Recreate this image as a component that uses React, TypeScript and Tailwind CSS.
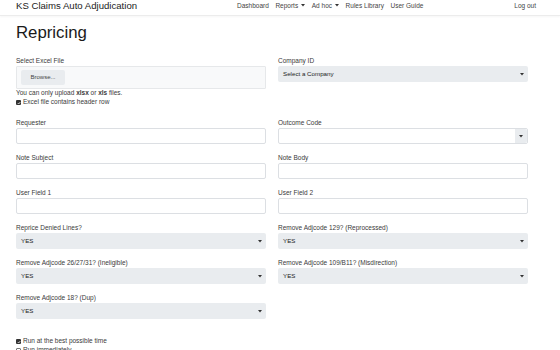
import React from "react";

const font = { fontFamily: '"Liberation Sans", Arial, sans-serif' };

function Caret({ className = "" }: { className?: string }) {
  return (
    <svg width="4" height="3" viewBox="0 0 4 3" className={className}>
      <path d="M0 0 L4 0 L2 2.6 Z" fill="#333" />
    </svg>
  );
}

function Label({ children }: { children: React.ReactNode }) {
  return <div className="h-[8px] leading-[8px] text-[6.5px] text-[#3a3a3a] mb-[1px] whitespace-nowrap">{children}</div>;
}

function TextInput() {
  return <div className="h-[16px] rounded-[2px] border border-[#dcdfe3] bg-white" />;
}

function GraySelect({ value }: { value: string }) {
  return (
    <div className="h-[16px] rounded-[2px] bg-[#e9ecef] flex items-center pl-[5px] pr-[4px]">
      <span className="text-[6.2px] text-[#222] leading-none flex-1">{value}</span>
      <Caret />
    </div>
  );
}

function Field({ label, children }: { label: string; children: React.ReactNode }) {
  return (
    <div className="mb-[10px]">
      <Label>{label}</Label>
      {children}
    </div>
  );
}

function Check({ checked, label }: { checked: boolean; label: string }) {
  return (
    <div className="flex items-center h-[9px] text-[6.5px] text-[#3a3a3a] leading-none">
      {checked ? (
        <span className="w-[5px] h-[5px] bg-[#333] rounded-[1px] flex items-center justify-center mr-[2px]">
          <svg width="4" height="4" viewBox="0 0 4 4">
            <path d="M0.7 2 L1.7 3 L3.3 1" stroke="white" strokeWidth="0.7" fill="none" />
          </svg>
        </span>
      ) : (
        <span className="w-[5px] h-[5px] border border-[#777] rounded-[1px] mr-[2px] bg-white" />
      )}
      <span>{label}</span>
    </div>
  );
}

export default function App() {
  return (
    <div className="w-[560px] h-[350px] overflow-hidden bg-white" style={font}>
      {/* Navbar */}
      <div className="h-[16px] flex items-start border-b border-[#ececec] shadow-[0_1px_2px_rgba(0,0,0,0.04)]">
        <div className="w-[237px] pl-[16px] text-[9.6px] leading-[11px] text-[#222] pt-[0px] whitespace-nowrap">
          KS Claims Auto Adjudication
        </div>
        <div className="flex items-center gap-[6.6px] text-[6.5px] text-[#444] leading-none pt-[2.5px]">
          <span>Dashboard</span>
          <span className="flex items-center">Reports<Caret className="ml-[3px]" /></span>
          <span className="flex items-center">Ad hoc<Caret className="ml-[3px]" /></span>
          <span>Rules Library</span>
          <span>User Guide</span>
        </div>
        <div className="ml-auto pr-[24px] text-[6.5px] text-[#444] leading-none pt-[2.5px]">Log out</div>
      </div>

      <div className="pl-[16px] w-[528px]">
        <h1 className="text-[16.8px] leading-[20px] text-[#1a1a1a] mt-[7px] mb-[14px]">Repricing</h1>

        <div className="grid grid-cols-[250px_250px] gap-x-[12px]">
          {/* Row 1 */}
          <div className="mb-[12px]">
            <Label>Select Excel File</Label>
            <div className="h-[23px] border border-[#e6e8ea] bg-[#f8f9fa] rounded-[1px] flex items-center pl-[4px]">
              <div className="h-[15px] w-[44px] bg-[#e9ecef] rounded-[2px] flex items-center justify-center text-[6px] text-[#444]">
                Browse...
              </div>
            </div>
            <div className="h-[9px] flex items-center text-[6.5px] text-[#3a3a3a] leading-none mt-[0px]">
              <span>
                You can only upload <b>xlsx</b> or <b>xls</b> files.
              </span>
            </div>
            <Check checked label="Excel file contains header row" />
          </div>
          <div>
            <Label>Company ID</Label>
            <GraySelect value="Select a Company" />
          </div>

          <Field label="Requester">
            <TextInput />
          </Field>
          <Field label="Outcome Code">
            <div className="h-[16px] rounded-[2px] border border-[#dcdfe3] bg-white flex">
              <div className="flex-1" />
              <div className="w-[12px] bg-[#e9ecef] flex items-center justify-center rounded-r-[2px]">
                <Caret />
              </div>
            </div>
          </Field>

          <Field label="Note Subject">
            <TextInput />
          </Field>
          <Field label="Note Body">
            <TextInput />
          </Field>

          <Field label="User Field 1">
            <TextInput />
          </Field>
          <Field label="User Field 2">
            <TextInput />
          </Field>

          <Field label="Reprice Denied Lines?">
            <GraySelect value="YES" />
          </Field>
          <Field label="Remove Adjcode 129? (Reprocessed)">
            <GraySelect value="YES" />
          </Field>

          <Field label="Remove Adjcode 26/27/31? (Ineligible)">
            <GraySelect value="YES" />
          </Field>
          <Field label="Remove Adjcode 109/B11? (Misdirection)">
            <GraySelect value="YES" />
          </Field>

          <Field label="Remove Adjcode 18? (Dup)">
            <GraySelect value="YES" />
          </Field>
          <div />
        </div>

        <div className="mt-[8px]">
          <Check checked label="Run at the best possible time" />
          <Check checked={false} label="Run immediately" />
        </div>
      </div>
    </div>
  );
}
